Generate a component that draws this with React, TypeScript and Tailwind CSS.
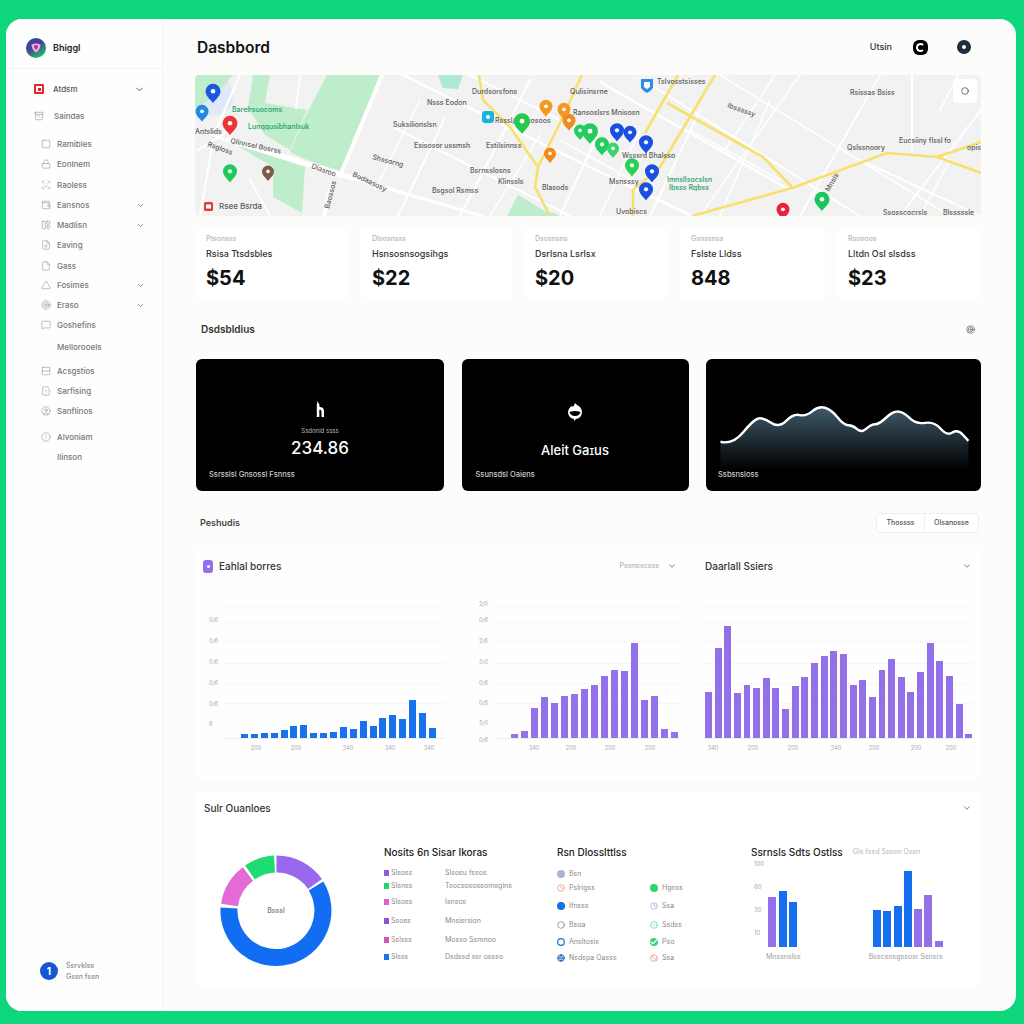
import {
  Archive,
  Ban,
  Check,
  ChevronDown,
  Circle,
  CircleAlert,
  CircleCheck,
  CircleDot,
  CircleUser,
  Clock,
  File,
  FileUp,
  FileWarning,
  Globe,
  LayoutPanelLeft,
  Lock,
  MessageSquare,
  Phone,
  Rows2,
  ScanFace,
  Square,
  Target,
  Triangle,
  Wallet,
} from "lucide-react"

const navItems = [
  { label: "Ramibles", icon: Square, gap: "" },
  { label: "Eonlnem", icon: Lock, gap: "" },
  { label: "Raoless", icon: ScanFace, gap: "mt-[1px]" },
  { label: "Eansnos", icon: Wallet, gap: "", more: true },
  { label: "Madlisn", icon: LayoutPanelLeft, gap: "", more: true },
  { label: "Eaving", icon: FileUp, gap: "" },
  { label: "Gass", icon: File, gap: "mt-[1px]" },
  { label: "Fosimes", icon: Triangle, gap: "-mt-[1px]", more: true },
  { label: "Eraso", icon: Target, gap: "", more: true },
  { label: "Goshefins", icon: MessageSquare, gap: "" },
  { label: "Mellorooels", gap: "mt-[2px]" },
  { label: "Acsgstios", icon: Rows2, gap: "mt-1" },
  { label: "Sarfising", icon: FileWarning, gap: "" },
  { label: "Sanflinos", icon: CircleUser, gap: "" },
  { label: "Alvoniam", icon: CircleAlert, gap: "mt-1.5" },
  { label: "Ilinson", gap: "" },
]

const stats = [
  { over: "Ptsonsss", title: "Rsisa Ttsdsbles", value: "$54" },
  { over: "Dlsosnsss", title: "Hsnsosnsogsihgs", value: "$22" },
  { over: "Dsosnsns", title: "Dsrlsna Lsrlsx", value: "$20" },
  { over: "Gsnssnss", title: "Fslste Lldss", value: "848" },
  { over: "Rsosoos", title: "Lltdn Osl slsdss", value: "$23" },
]

const roads: number[][] = [
  [228, 140, 352, 178, 5],
  [352, 178, 482, 216, 3],
  [403, 75, 612, 178, 2.5],
  [612, 178, 692, 216, 2.5],
  [470, 75, 640, 160, 2],
  [600, 82, 790, 190, 2.5],
  [640, 78, 860, 216, 2],
  [395, 128, 570, 216, 2],
  [720, 75, 950, 216, 1.5],
  [860, 160, 981, 216, 2],
  [382, 75, 340, 176, 4],
  [445, 118, 398, 216, 2],
  [510, 120, 460, 216, 2],
  [530, 80, 505, 130, 2],
  [600, 130, 560, 216, 2],
  [540, 135, 490, 216, 1.5],
  [640, 130, 600, 216, 1.5],
  [700, 110, 650, 216, 2],
  [770, 100, 720, 216, 1.5],
  [800, 75, 700, 216, 1.5],
  [775, 75, 725, 150, 1.5],
  [880, 75, 800, 216, 2],
  [912, 75, 912, 150, 2],
  [981, 110, 900, 216, 2],
  [950, 160, 920, 216, 1.5],
  [300, 75, 296, 108, 2],
  [240, 75, 216, 130, 2],
  [198, 150, 230, 130, 2],
  [212, 147, 200, 216, 2],
  [250, 180, 270, 216, 2],
  [330, 190, 324, 216, 4],
  [420, 100, 375, 190, 1.5],
  [195, 128, 225, 140, 2],
  [560, 140, 650, 190, 1.5],
  [690, 130, 780, 180, 1.5],
  [958, 75, 940, 110, 1.5],
]

const yellowRoads = [
  "M479 75 L483 100 L510 127 L538 167 L535 187 L550 216",
  "M582 75 L560 123 L538 167",
  "M678 75 L645 133",
  "M715 75 L660 167 L633 190 L633 216",
  "M667 103 L763 157 L792 187",
  "M692 216 L792 188 L887 153 L937 157 L981 142",
  "M937 157 L981 173",
]

const pins = [
  { x: 213, y: 92, r: 7.5, c: "#1d56e0" },
  { x: 202, y: 112, r: 6.5, c: "#2289e6" },
  { x: 230, y: 124, r: 7.5, c: "#ee3535" },
  { x: 230, y: 172, r: 7, c: "#1fc95c" },
  { x: 268, y: 172, r: 6, c: "#7d5a4a" },
  { x: 522, y: 122, r: 8, c: "#25c94c" },
  { x: 546, y: 107, r: 6.5, c: "#f29a1f" },
  { x: 564, y: 110, r: 6.5, c: "#f29a1f" },
  { x: 569, y: 121, r: 6.5, c: "#f08a1c" },
  { x: 550, y: 154, r: 6, c: "#f08a1c" },
  { x: 580, y: 131, r: 6, c: "#22cc5e" },
  { x: 590, y: 132, r: 8, c: "#22cc5e" },
  { x: 602, y: 145, r: 7, c: "#22cc5e" },
  { x: 613, y: 149, r: 6, c: "#3bd56f" },
  { x: 632, y: 166, r: 7, c: "#2bcf55" },
  { x: 617, y: 131, r: 7, c: "#1b4fe0" },
  { x: 630, y: 133, r: 6.5, c: "#1b4fe0" },
  { x: 646, y: 143, r: 7, c: "#1b4fe0" },
  { x: 652, y: 172, r: 7, c: "#1b4fe0" },
  { x: 646, y: 190, r: 7, c: "#1b4fe0" },
  { x: 783, y: 210, r: 6.5, c: "#e8223a" },
  { x: 822, y: 200, r: 7.5, c: "#18c95a" },
]

const mapLabels: { t: string; x: number; y: number; rot?: number; green?: boolean }[] = [
  { t: "Barelrsuocoms", x: 232, y: 112, green: true },
  { t: "Lunqqusibhanlsuk", x: 248, y: 129, green: true },
  { t: "Antslids", x: 195, y: 134 },
  { t: "Qlinnsel Bosrss", x: 230, y: 143, rot: 12 },
  { t: "Rsgloss", x: 207, y: 146, rot: 20 },
  { t: "Diasroo", x: 311, y: 168, rot: 20 },
  { t: "Bodaasosy", x: 352, y: 176, rot: 25 },
  { t: "Baossos", x: 329, y: 209, rot: -75 },
  { t: "Suksilionslsn", x: 393, y: 127 },
  { t: "Nsss Eodon", x: 427, y: 105 },
  { t: "Durdsorsfons", x: 472, y: 94 },
  { t: "Qulisinsrne", x: 570, y: 94 },
  { t: "Ransoslsrs Mnisosn", x: 573, y: 115 },
  { t: "Rsssl/Iinssosoos", x: 495, y: 123 },
  { t: "Esisosor ussmsh", x: 414, y: 148 },
  { t: "Estilsinnss", x: 486, y: 148 },
  { t: "Shssorng", x: 372, y: 159, rot: 15 },
  { t: "Bsrnsslosns", x: 470, y: 173 },
  { t: "Klinssls", x: 498, y: 184 },
  { t: "Blasods", x: 542, y: 190 },
  { t: "Bsgsol Rsmss", x: 432, y: 193 },
  { t: "Tslvosstsisses", x: 657, y: 84 },
  { t: "Rsissas Bsiss", x: 850, y: 95 },
  { t: "Ibsssssy", x: 727, y: 107, rot: 20 },
  { t: "Qslssnoory", x: 847, y: 150 },
  { t: "Eucsiiny flssl fo", x: 899, y: 143 },
  { t: "opis", x: 967, y: 150 },
  { t: "Wsssrd Bhalsso", x: 622, y: 158 },
  { t: "Msnsssy", x: 609, y: 184 },
  { t: "Imnsllsocslsn", x: 667, y: 182, green: true },
  { t: "Ibsss Rqbss", x: 669, y: 190, green: true },
  { t: "Uvobiscs", x: 616, y: 214 },
  { t: "Mnsis", x: 829, y: 192, rot: -60 },
  { t: "Ssosscocrsls", x: 883, y: 215 },
  { t: "Blsssssle", x: 943, y: 215 },
]

const blueBars = [4.3, 4.3, 5, 5, 8, 12.3, 13.3, 5, 5, 6, 11, 9, 17, 12.3, 20, 23.3, 19, 38.3, 25, 9.7]
const midBars = [4.3, 7.3, 29.7, 41, 35, 41.7, 44.3, 49.3, 53, 62.3, 68.3, 66.7, 95.3, 37.7, 42.3, 9.3, 5.7]
const wideBars = [46, 90, 112, 45, 53, 50, 60, 50, 29, 52, 61, 75, 82, 87, 84, 53, 58, 41, 68, 79, 61, 46, 66, 95, 77, 62, 34, 4]
const gridRows = [0, 16, 35, 57, 77, 97]

const areaPoints = [
  [717, 443], [730, 446], [751, 420], [761, 418], [777, 429], [792, 414], [805, 417], [818, 406],
  [831, 410], [844, 426], [853, 426], [862, 434], [872, 425], [880, 425], [895, 411], [906, 413],
  [918, 425], [937, 422], [950, 437], [961, 430], [972, 442],
]

// rounds the corners of the line by curving through the midpoints
function smoothLine(points: number[][]) {
  let d = `M${points[0][0]} ${points[0][1]}`
  for (let i = 1; i < points.length - 1; i++) {
    const mx = (points[i][0] + points[i + 1][0]) / 2
    const my = (points[i][1] + points[i + 1][1]) / 2
    d += ` Q${points[i][0]} ${points[i][1]} ${mx} ${my}`
  }
  const last = points[points.length - 1]
  return `${d} L${last[0]} ${last[1]}`
}

const legendRows = [
  { c: "bg-[#8b5fe0]", a: "Slsoss", b: "Slsosu fssos", gap: "" },
  { c: "bg-[#22d86e]", a: "Slsnss", b: "Tsocsosossomsgins", gap: "mt-[3px]" },
  { c: "bg-[#dd5fc8]", a: "Slsoss", b: "Isnsos", gap: "mt-[6px]" },
  { c: "bg-[#8656d8]", a: "Ssoss", b: "Mnsisrsion", gap: "mt-[9px]" },
  { c: "bg-[#d255b4]", a: "Sslsss", b: "Mosso Ssmnoo", gap: "mt-[9px]" },
  { c: "bg-[#2070e8]", a: "Slsss", b: "Dsdssd ssr ossso", gap: "mt-[7px]" },
]

function Nav() {
  return (
    <aside className="flex w-[157px] shrink-0 flex-col border-r border-[#f5f5f4] bg-[#fefefe]">
      <div className="flex h-[50px] shrink-0 items-center gap-[7px] border-b border-[#f3f3f3] pt-[8px] pl-[20px]">
        <svg viewBox="0 0 20 20" className="size-5">
          <defs>
            <linearGradient id="logo" x1="0" y1="0" x2="0.6" y2="1">
              <stop offset="0" stopColor="#2b4a9e" />
              <stop offset="0.5" stopColor="#4b3f92" />
              <stop offset="1" stopColor="#16c06a" />
            </linearGradient>
          </defs>
          <circle cx="10" cy="10" r="10" fill="url(#logo)" />
          <path d="M5.5 6.5 Q10 4.5 14.5 6.5 Q14.5 11.5 10 14.5 Q5.5 11.5 5.5 6.5Z" fill="#f2a5e5" />
          <path d="M7.8 7.5 Q10 6.8 12.2 7.5 Q12 10.5 10 11.8 Q8 10.5 7.8 7.5Z" fill="#a0359a" />
        </svg>
        <span className="text-[9px] font-semibold text-[#222]">Bhiggl</span>
      </div>
      <div className="mt-[10px] flex h-5 items-center pr-[17px] pl-[28px]">
        <span className="flex size-[10px] items-center justify-center rounded-[1px] bg-[#e0262c]">
          <span className="flex size-[6px] items-center justify-center bg-white">
            <span className="size-[3px] bg-[#e0262c]" />
          </span>
        </span>
        <span className="ml-[9px] text-[8px] font-medium text-[#555]">Atdsm</span>
        <ChevronDown className="ml-auto size-[11px] text-[#555]" />
      </div>
      <div className="mt-[7px] flex h-5 items-center pl-[28px]">
        <Archive className="size-[10px] text-[#888]" strokeWidth={1.3} />
        <span className="ml-[10px] text-[8px] font-medium text-[#777]">Saindas</span>
      </div>
      <div className="mt-[8px] flex flex-col pr-[17px] pl-[35px]">
        {navItems.map((item) => (
          <div key={item.label} className={`flex h-5 items-center ${item.gap}`}>
            <span className="flex w-[16px] shrink-0">
              {item.icon && <item.icon className="size-[10px] text-[#8a8a8a]" strokeWidth={1.3} />}
            </span>
            <span className="text-[8px] font-medium text-[#777]">{item.label}</span>
            {item.more && <ChevronDown className="ml-auto size-[9px] text-[#666]" />}
          </div>
        ))}
      </div>
      <div className="mt-auto mb-[30px] flex items-center gap-2 pl-[34px]">
        <span className="flex size-[18px] items-center justify-center rounded-full bg-[#1558d6] text-[10px] font-bold text-white">
          1
        </span>
        <div className="flex flex-col gap-[2px] text-[7px] leading-[9px] font-medium text-[#8c8c8c]">
          <span>Ssrvklss</span>
          <span>Gssn fssn</span>
        </div>
      </div>
    </aside>
  )
}

function MapPanel() {
  return (
    <div className="relative h-[141px] overflow-hidden rounded-[4px]">
      <svg viewBox="195 75 786 141" className="block h-[141px] w-[786px] bg-[#f2f2f2]">
        <circle cx="213" cy="96" r="20" fill="#dfe9f8" />
        <g fill="#bdedca">
          <path d="M195 75 L233 75 L223 87 L200 107 L195 107Z" />
          <path d="M327 75 L380 75 L343 172 L307 160 L290 152 L305 117Z" />
          <path d="M253 75 L270 75 L265 103 L307 110 L290 150 L265 135 L248 108Z" />
          <path d="M233 143 L305 167 L302 213 L273 197 L273 167Z" />
          <path d="M507 216 L518 195 L543 210 L563 216Z" />
        </g>
        <path d="M438 75 L463 75 L458 89 L443 88Z" fill="#aee8d8" />
        <g stroke="#ffffff" strokeLinecap="round">
          {roads.map(([x1, y1, x2, y2, w], i) => (
            <line key={i} x1={x1} y1={y1} x2={x2} y2={y2} strokeWidth={w} />
          ))}
        </g>
        <g fill="none" stroke="#f7e06e" strokeWidth="2.6" strokeLinejoin="round">
          {yellowRoads.map((d) => (
            <path key={d} d={d} />
          ))}
        </g>
        <g fontFamily="Inter, sans-serif" fontSize="7" fontWeight="500">
          {mapLabels.map((l) => (
            <text
              key={l.t}
              x={l.x}
              y={l.y}
              fill={l.green ? "#22a06b" : "#5c5c5c"}
              transform={l.rot ? `rotate(${l.rot} ${l.x} ${l.y})` : undefined}
            >
              {l.t}
            </text>
          ))}
          <text x="219" y="209" fill="#5c5c5c" fontSize="8">
            Rsee Bsrda
          </text>
        </g>
        <rect x="204" y="202" width="9" height="9" rx="1.5" fill="#e5383b" />
        <rect x="206" y="204.5" width="5" height="4" fill="#ffffff" />
        <rect x="482" y="111" width="12" height="12" rx="3" fill="#18b4e0" />
        <circle cx="488" cy="117" r="2" fill="#ffffff" />
        <path d="M641 79 H653 V88 Q650 92 647 93 Q644 92 641 88Z" fill="#2c90ea" />
        <path d="M644 82 H650 V87 L647 89 L644 87Z" fill="#ffffff" />
        {pins.map((p) => (
          <g key={`${p.x}-${p.y}`} transform={`translate(${p.x} ${p.y}) scale(${p.r / 10})`}>
            <path d="M0 15 C-3 10 -10 6 -10 -1 A10 10 0 1 1 10 -1 C10 6 3 10 0 15Z" fill={p.c} />
            <circle cx="0" cy="-1" r="3" fill="#ffffff" />
          </g>
        ))}
      </svg>
      <div className="absolute top-[4px] right-[4px] flex size-6 items-center justify-center rounded-[4px] bg-white">
        <Circle className="size-[8px] text-[#333]" strokeWidth={2} />
      </div>
    </div>
  )
}

function StatCards() {
  return (
    <div className="mt-[11px] grid grid-cols-[154px_151px_144px_145px_144px] gap-3">
      {stats.map((s) => (
        <div key={s.over} className="flex h-[73px] flex-col rounded-[8px] bg-white pt-[7px] pl-[11px]">
          <span className="text-[7px] leading-[9px] font-medium text-[#b5b5b5]">{s.over}</span>
          <span className="mt-[5px] text-[9px] leading-[12px] font-medium text-[#333]">{s.title}</span>
          <span className="mt-[5px] text-[20px] leading-[26px] font-bold text-[#111]">{s.value}</span>
        </div>
      ))}
    </div>
  )
}

function DarkCards() {
  const line = smoothLine(areaPoints)
  return (
    <div className="mt-[19px] ml-[1px] grid grid-cols-[248px_227px_275px] gap-[17.5px]">
      <div className="flex h-[132px] flex-col items-center rounded-[6px] bg-black pt-[40px] text-white">
        <svg viewBox="0 0 20 20" className="size-5" fill="#ffffff">
          <path d="M7.5 2 L9.5 6 L9.5 8 C12.5 8 14 9.5 14 12 V18 H11.5 V12.5 C11.5 11 10.5 10.8 9.3 10.8 V18 H6.8 V6Z" />
        </svg>
        <span className="mt-[8px] text-[6px] leading-[8px] text-[#bbb]">Ssdonld ssss</span>
        <span className="mt-[2px] text-[17px] leading-[22px] font-medium">234.86</span>
        <span className="mt-auto mb-[11px] self-start pl-[13px] text-[7.5px] leading-[10px] font-medium text-[#ccc]">
          Ssrsslsl Gnsossl Fsnnss
        </span>
      </div>
      <div className="flex h-[132px] flex-col items-center rounded-[6px] bg-black pt-[43px] text-white">
        <svg viewBox="0 0 20 20" className="size-5" fill="#ffffff">
          <path d="M10 1 L12 3 A8 8 0 0 1 17 10 A7.5 7.5 0 0 1 11 17 L9 19 L9 17 A7.5 7.5 0 0 1 3 10 A8 8 0 0 1 7 4 Q8.5 6 10 1Z" />
          <path d="M4.5 10 Q10 8 15.5 10 Q14.5 14 10 14 Q5.5 14 4.5 10Z" fill="#000000" />
        </svg>
        <span className="mt-[20px] text-[13px] leading-[16px] font-medium">Aleit Gaɪus</span>
        <span className="mt-auto mb-[11px] self-start pl-[14px] text-[7.5px] leading-[10px] font-medium text-[#ccc]">
          Ssunsdsl Oaiens
        </span>
      </div>
      <div className="flex h-[132px] flex-col rounded-[6px] bg-black">
        <svg viewBox="706 400 275 72" className="mt-[41px] block h-[72px] w-[275px]">
          <defs>
            <linearGradient id="area" x1="0" y1="0" x2="0" y2="1">
              <stop offset="0" stopColor="#3f5a6b" />
              <stop offset="1" stopColor="#000000" />
            </linearGradient>
          </defs>
          <path d={`${line} V472 H717Z`} fill="url(#area)" />
          <path d={line} fill="none" stroke="#ffffff" strokeWidth="2.5" strokeLinejoin="round" />
        </svg>
        <span className="mt-auto mb-[11px] pl-[12px] text-[7.5px] leading-[10px] font-medium text-[#ccc]">
          Ssbsnsloss
        </span>
      </div>
    </div>
  )
}

function Plot({
  width,
  pad,
  bars,
  color,
  xLabels,
  yLabels,
  step,
  barWidth,
}: {
  width: string
  pad: string
  bars: number[]
  color: string
  xLabels: number[]
  yLabels?: { y: number; t: string }[]
  step: string
  barWidth: string
}) {
  return (
    <div className={`relative h-[150px] shrink-0 ${width}`}>
      {gridRows.map((y) => (
        <div key={y} className="absolute inset-x-0 h-px bg-[#f6f6f5]" style={{ top: y }} />
      ))}
      <div className="absolute inset-x-0 top-[132px] h-px bg-[#eeeeec]" />
      {yLabels?.map((l) => (
        <span
          key={l.y}
          className="absolute -left-[16px] -translate-y-1/2 text-[5.5px] leading-[8px] text-[#a8a8a8]"
          style={{ top: l.y }}
        >
          {l.t}
        </span>
      ))}
      <div className={`relative flex h-[132px] items-end ${pad} ${step}`}>
        {bars.map((h, i) => (
          <div key={i} className={`${barWidth} shrink-0 ${color}`} style={{ height: h }} />
        ))}
      </div>
      {xLabels.map((x) => (
        <span
          key={x}
          className="absolute top-[138px] -translate-x-1/2 text-[5.5px] leading-[8px] text-[#a8a8a8]"
          style={{ left: x }}
        >
          {x % 3 === 0 ? "340" : "200"}
        </span>
      ))}
    </div>
  )
}

function ChartsPanel() {
  return (
    <div className="mt-[11px] h-[235px] rounded-[8px] bg-[#fefefe] pt-[10px]">
      <div className="flex h-[22px] items-center text-[10px] font-medium text-[#333]">
        <span className="ml-[8px] flex h-[13px] w-[10px] items-center justify-center rounded-[3px] bg-[#9370ea]">
          <span className="size-[3px] rounded-full bg-white" />
        </span>
        <span className="ml-[6px]">Eahlal borres</span>
        <span className="ml-auto text-[7px] text-[#b5b5b5]">Posnsscsss</span>
        <ChevronDown className="ml-[8px] size-[10px] text-[#666]" />
        <span className="ml-[28px] w-[257px]">Daarlall Ssiers</span>
        <ChevronDown className="mr-[9px] size-[10px] text-[#666]" />
      </div>
      <div className="mt-[29px] flex">
        <div className="ml-[30px]">
          <Plot
            width="w-[220px]"
            pad="pl-[16px]"
            step="gap-[2.9px]"
            barWidth="w-[7px]"
            bars={blueBars}
            color="bg-[#1872ee]"
            xLabels={[31, 71, 123, 165, 204]}
            yLabels={[
              { y: 14, t: "0/6" },
              { y: 35, t: "0/6" },
              { y: 56, t: "0/6" },
              { y: 77, t: "0/6" },
              { y: 98, t: "0/6" },
              { y: 118, t: "6" },
            ]}
          />
        </div>
        <div className="ml-[50px]">
          <Plot
            width="w-[186px]"
            pad="pl-[16px]"
            step="gap-[3px]"
            barWidth="w-[7px]"
            bars={midBars}
            color="bg-[#9271ea]"
            xLabels={[39, 76, 115, 155]}
            yLabels={[
              { y: -2, t: "2/0" },
              { y: 14, t: "0/6" },
              { y: 35, t: "2/6" },
              { y: 56, t: "3/0" },
              { y: 77, t: "0/6" },
              { y: 97, t: "0/6" },
              { y: 117, t: "3/0" },
              { y: 134, t: "0/6" },
            ]}
          />
        </div>
        <div className="ml-[23px]">
          <Plot
            width="w-[269px]"
            pad="pl-[1px]"
            step="gap-[2.75px]"
            barWidth="w-[6.9px]"
            bars={wideBars}
            color="bg-[#9370ea]"
            xLabels={[9, 49, 89, 132, 170, 212, 247]}
          />
        </div>
      </div>
    </div>
  )
}

function Donut() {
  return (
    <svg viewBox="0 0 112 112" className="size-[112px] shrink-0">
      <g fill="none" strokeWidth="17">
        <path d="M56.5 9 A47 47 0 0 1 95 29" stroke="#9a68ee" />
        <path d="M96 31 A47 47 0 1 1 9 53" stroke="#116ef2" />
        <path d="M9.5 50 A47 47 0 0 1 28 19" stroke="#e46bd6" />
        <path d="M30 17.5 A47 47 0 0 1 54.5 9" stroke="#1fdc72" />
      </g>
    </svg>
  )
}

function Overview() {
  const blue = "bg-[#156fee]"
  const purple = "bg-[#9370ea]"
  return (
    <div className="mt-[12px] h-[194px] rounded-[8px] bg-white">
      <div className="flex h-[32px] items-center pr-[9px] pl-[9px]">
        <span className="text-[10px] font-medium text-[#333]">Sulr Ouanloes</span>
        <ChevronDown className="ml-auto size-[10px] text-[#666]" />
      </div>
      <div className="flex">
        <div className="relative mt-[31px] ml-[25px]">
          <Donut />
          <span className="absolute top-1/2 left-1/2 -translate-x-1/2 -translate-y-1/2 text-[7px] font-medium text-[#777]">
            Bsssl
          </span>
        </div>
        <div className="ml-[52px] w-[173px] pt-[22px]">
          <div className="text-[10px] leading-[12px] font-medium text-[#222]">Nosits 6n Sisar Ikoras</div>
          <div className="mt-[10px] flex flex-col">
            {legendRows.map((r) => (
              <div key={r.a + r.b} className={`flex h-[10px] items-center text-[7px] text-[#8a8a8a] ${r.gap}`}>
                <span className={`mr-[2px] h-[6px] w-[5px] ${r.c}`} />
                <span className="w-[54px]">{r.a}</span>
                <span>{r.b}</span>
              </div>
            ))}
          </div>
        </div>
        <div className="w-[194px] pt-[22px]">
          <div className="text-[10px] leading-[12px] font-medium text-[#222]">Rsn Dlosslttlss</div>
          <div className="mt-[11px] grid grid-cols-[93px_1fr] text-[7px] text-[#8a8a8a]">
            <Row icon={<span className="size-2 rounded-full bg-[#a9b4d4]" />} label="Bsn" />
            <div />
            <Row className="mt-[4px]" icon={<Clock className="size-2 text-[#e58a78]" />} label="Pslrigss" />
            <Row
              className="mt-[4px]"
              icon={<Phone className="size-2 rounded-full bg-[#2fd66c] text-[#2fd66c]" />}
              label="Hgnss"
            />
            <Row className="mt-[8px]" icon={<CircleDot className="size-2 rounded-full bg-[#1272ea] text-[#1272ea]" />} label="Ifnsss" />
            <Row className="mt-[8px]" icon={<Clock className="size-2 text-[#b493e8]" />} label="Ssa" />
            <Row className="mt-[9px]" icon={<Circle className="size-2 text-[#5a6fa8]" />} label="Bsoa" />
            <Row className="mt-[9px]" icon={<CircleCheck className="size-2 text-[#3bd68a]" />} label="Ssdss" />
            <Row className="mt-[7px]" icon={<Circle className="size-2 text-[#1a6fd0]" strokeWidth={3.5} />} label="Ansltosis" />
            <Row
              className="mt-[7px]"
              icon={<Check className="size-2 rounded-full bg-[#2fd66c] text-white" strokeWidth={4} />}
              label="Pso"
            />
            <Row className="mt-[6px]" icon={<Globe className="size-2 text-[#2a6fc0]" strokeWidth={3} />} label="Nsdspa Oasss" />
            <Row className="mt-[6px]" icon={<Ban className="size-2 text-[#e57a78]" />} label="Ssa" />
          </div>
        </div>
        <div className="w-[222px] pt-[22px]">
          <div className="flex items-center">
            <span className="text-[10px] leading-[12px] font-medium text-[#222]">Ssrnsls Sdts Ostlss</span>
            <span className="ml-[10px] text-[7px] text-[#b5b5b5]">Gls fssd Ssosn Ossn</span>
          </div>
          <div className="relative mt-[2px] flex h-[87px] items-end pl-[17px]">
            <div className="absolute top-0 left-[3px] flex h-[87px] flex-col gap-[15px] text-[6px] leading-[8px] text-[#a8a8a8]">
              <span>100</span>
              <span>60</span>
              <span>30</span>
              <span>10</span>
            </div>
            <div className="flex items-end gap-[2.5px]">
              <SmallBar color={purple} h="h-[50px]" />
              <SmallBar color={blue} h="h-[56px]" />
              <SmallBar color={blue} h="h-[45px]" />
            </div>
            <div className="ml-[76px] flex items-end gap-[2.3px]">
              <SmallBar color={blue} h="h-[37px]" />
              <SmallBar color={blue} h="h-[36px]" />
              <SmallBar color={blue} h="h-[41px]" />
              <SmallBar color={blue} h="h-[76px]" />
              <SmallBar color={purple} h="h-[38px]" />
              <SmallBar color={purple} h="h-[52px]" />
              <SmallBar color={purple} h="h-[6px]" />
            </div>
          </div>
          <div className="mt-[6px] flex text-[7px] leading-[8px] text-[#9a9a9a]">
            <span className="ml-[15px]">Mnssnslss</span>
            <span className="ml-[68px]">Bsscsnsgssosr Ssnsrs</span>
          </div>
        </div>
      </div>
    </div>
  )
}

function Row({ icon, label, className = "" }: { icon: React.ReactNode; label: string; className?: string }) {
  return (
    <div className={`flex h-[10px] items-center gap-[4px] ${className}`}>
      {icon}
      <span>{label}</span>
    </div>
  )
}

function SmallBar({ color, h }: { color: string; h: string }) {
  return <div className={`w-[8px] ${color} ${h}`} />
}

export default function App() {
  return (
    <div className="h-[1024px] w-[1024px] overflow-hidden bg-[#0dd67b] pt-[19px] pr-[8px] pb-[13px] pl-[6px] font-['Inter',sans-serif]">
      <div className="flex h-full overflow-hidden rounded-[16px] bg-[#fcfcfb]">
        <Nav />
        <main className="w-[786px] shrink-0 pl-[32px] box-content">
          <header className="flex h-[56px] items-center pl-[2px]">
            <h1 className="pt-[1px] text-[15.5px] font-semibold text-[#111]">Dasbbord</h1>
            <span className="ml-auto text-[9px] font-medium text-[#333]">Utsin</span>
            <span className="ml-[21px] flex size-[15px] items-center justify-center rounded-[6px] bg-black">
              <span className="size-[9px] rounded-full border-2 border-r-transparent border-white" />
            </span>
            <span className="mr-[10px] ml-[29px] flex size-[14px] items-center justify-center rounded-full bg-[#1f2d3a]">
              <span className="size-[4px] rounded-full bg-white" />
            </span>
          </header>
          <MapPanel />
          <StatCards />
          <div className="mt-[18px] flex h-[22px] items-center pr-[6px] pl-[6px]">
            <span className="text-[10px] font-semibold text-[#333]">Dsdsbldius</span>
            <Target className="ml-auto size-[9px] text-[#666]" />
          </div>
          <DarkCards />
          <div className="mt-[21px] flex h-[22px] items-center pr-[2px] pl-[5px]">
            <span className="text-[9px] font-semibold text-[#444]">Peshudis</span>
            <div className="ml-auto flex h-[20px] items-center rounded-[5px] border border-[#eeeeee] bg-white text-[7px] font-medium text-[#555]">
              <span className="flex h-full w-[48px] items-center justify-center border-r border-[#eeeeee]">Thossss</span>
              <span className="flex w-[53px] items-center justify-center">Olsanosse</span>
            </div>
          </div>
          <ChartsPanel />
          <Overview />
        </main>
      </div>
    </div>
  )
}
